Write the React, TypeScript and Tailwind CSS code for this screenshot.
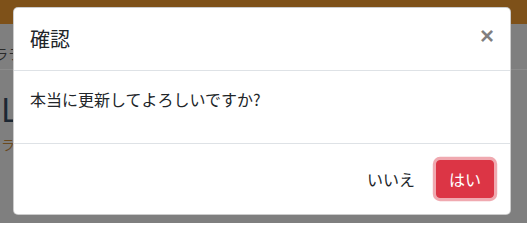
export default function App() {
  return (
    <div className="relative h-[223px] w-[527px] overflow-hidden bg-[#7f7f7f] font-['Noto_Sans_CJK_JP','Noto_Sans',sans-serif] text-[#212529]">
      {/* page behind the backdrop */}
      <div className="h-6 bg-[#7e5119]" />
      <div className="flex h-[46px] items-end border-b border-[#8b8b8b] pb-[5px]">
        <span className="-ml-[5px] text-[13px] leading-5 text-[#2b2b2b]">ララ一覧</span>
      </div>
      <div className="pl-[1px] pt-[18px]">
        <h1 className="text-[32px] leading-[40px] text-[#1c2733]">List</h1>
        <p className="mt-[4px] text-[14px] leading-6 text-[#6a4a1f]">ラベル</p>
      </div>

      {/* modal */}
      <div className="absolute left-[13px] top-[7px] w-[498px] rounded-[5px] border border-black/20 bg-white">
        <div className="flex items-start border-b border-[#dee2e6] p-4">
          <h5 className="text-[20px] leading-[30px]">確認</h5>
          <button className="-m-4 ml-auto p-4 font-['Liberation_Sans',sans-serif] text-[24px] font-bold leading-none text-black/50">
            ×
          </button>
        </div>
        <div className="border-b border-[#dee2e6] p-4">
          <p className="mb-4 text-[16px] leading-6">本当に更新してよろしいですか?</p>
        </div>
        <div className="flex items-center justify-end p-3">
          <button className="m-1 rounded border border-transparent px-3 py-1.5 text-[16px] leading-6 text-[#212529]">
            いいえ
          </button>
          <button className="m-1 rounded border border-[#dc3545] bg-[#dc3545] px-3 py-1.5 text-[16px] leading-6 text-white shadow-[0_0_0_3.2px_rgba(225,83,97,0.5)]">
            はい
          </button>
        </div>
      </div>
    </div>
  )
}
